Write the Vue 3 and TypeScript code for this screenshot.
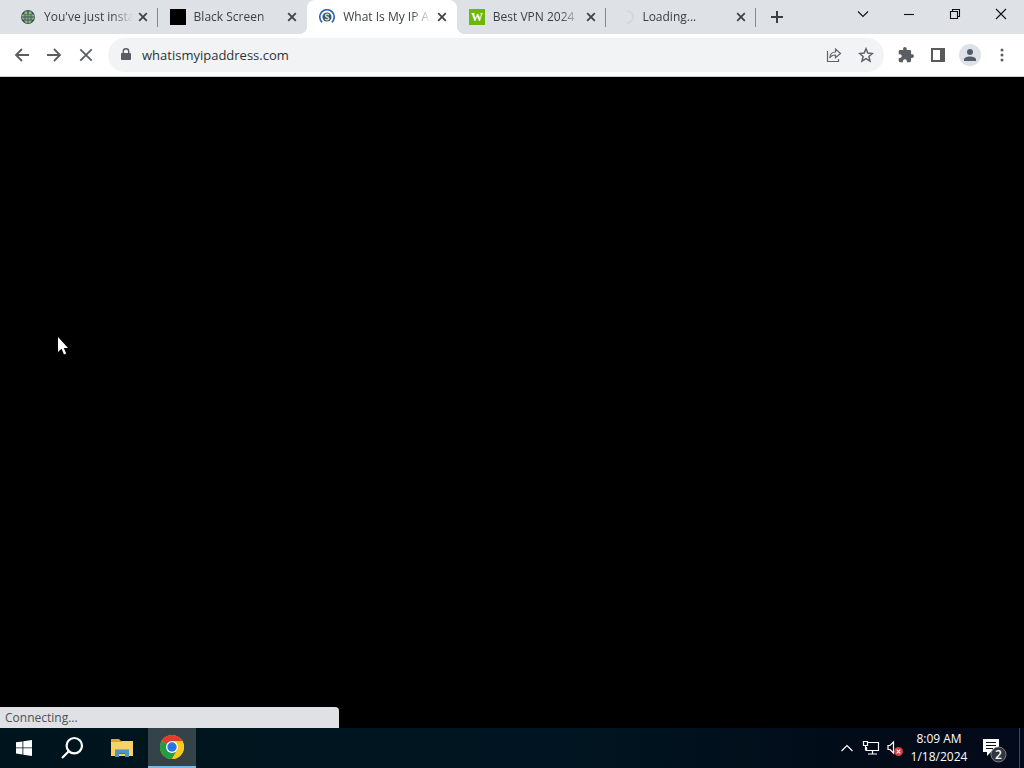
<script setup lang="ts">
import { ref } from 'vue'

interface Tab {
  id: number
  title: string
  icon: 'globe' | 'black' | 'ip' | 'wiz' | 'spinner'
}

const tabs: Tab[] = [
  { id: 1, title: "You've just insta", icon: 'globe' },
  { id: 2, title: 'Black Screen', icon: 'black' },
  { id: 3, title: 'What Is My IP A', icon: 'ip' },
  { id: 4, title: 'Best VPN 2024', icon: 'wiz' },
  { id: 5, title: 'Loading...', icon: 'spinner' },
]
const activeTab = ref(3)
const address = ref('whatismyipaddress.com')
</script>

<template>
  <div class="desktop">
    <header class="strip">
      <nav class="tabs" aria-label="Tabs">
        <div v-for="tab in tabs" :key="tab.id" class="tab" :class="{ active: tab.id === activeTab, before: tab.id === activeTab - 1 }">
          <button class="pick" @click="activeTab = tab.id">
            <svg v-if="tab.icon === 'globe'" class="fav" viewBox="0 0 16 16">
              <circle cx="8" cy="8" r="7" fill="#3b5364" />
              <path d="M5 2.500h2.400v2.400H4zM8.600 2.500H11l1 2.400H8.600zM2 5.600h2.600v2H1.500zM5.400 5.600h2.200v2H5.400zM8.400 5.600h2.200v2H8.400zM11.400 5.600H14l.5 2h-3.100zM1.500 8.400h3.100v2.200H2.500zM5.400 8.400h2.200v2.200H5.400zM8.400 8.400h2.200v2.200H8.400zM11.400 8.400h3.100l-1 2.200h-2.100zM4 11.400h3.600v2.600H6zM8.400 11.400H12L10 14H8.400z" fill="#8fb573" />
            </svg>
            <svg v-else-if="tab.icon === 'black'" class="fav" viewBox="0 0 16 16"><path d="M0 0h16v16H0z" /></svg>
            <svg v-else-if="tab.icon === 'ip'" class="fav" viewBox="0 0 16 16">
              <path d="M3.200 13.300A7.200 7.200 0 1 1 12.800 13.300" fill="none" stroke="#2d69b3" stroke-width="1.700" />
              <circle cx="8" cy="8" r="4.600" fill="#42586b" />
              <path d="M10 5.800C7 4 5 7 8 8s2 4-2 2.200" fill="none" stroke="#d5dfd6" stroke-width="1.400" />
            </svg>
            <svg v-else-if="tab.icon === 'wiz'" class="fav" viewBox="0 0 16 16">
              <path d="M0 0h16v16H0z" fill="#6cb70c" />
              <text x="8" y="12" text-anchor="middle" class="wiz-letter">W</text>
            </svg>
            <svg v-else class="fav" viewBox="0 0 16 16"><path d="M9 2a6 6 0 0 1 0 12" fill="none" stroke="#cfd9e3" stroke-width="2" /></svg>
            <span class="title">{{ tab.title }}</span>
          </button>
          <button class="close" aria-label="Close tab">
            <svg width="10" height="10" viewBox="0 0 10 10"><path d="m1.200 1.200 7.600 7.600m0-7.600L1.200 8.800" stroke="#404348" stroke-width="1.800" /></svg>
          </button>
        </div>
      </nav>
      <button class="new-tab" aria-label="New tab">
        <svg width="14" height="14" viewBox="0 0 14 14"><path d="M7 1v12M1 7h12" stroke="#3b3e42" stroke-width="2" /></svg>
      </button>
      <div class="window-controls">
        <button aria-label="Search tabs"><svg width="12" height="12" viewBox="0 0 12 12"><path d="m1 3.500 5 5 5-5" /></svg></button>
        <button aria-label="Minimize"><svg width="12" height="12" viewBox="0 0 12 12"><path d="M1 6.500h10" /></svg></button>
        <button aria-label="Restore"><svg width="12" height="12" viewBox="0 0 12 12"><path d="M1.500 3.500h7v7h-7zM3.500 3V1.500h7v7H9" /></svg></button>
        <button aria-label="Close"><svg width="12" height="12" viewBox="0 0 12 12"><path d="m1 1 10 10m0-10L1 11" /></svg></button>
      </div>
    </header>

    <div class="toolbar">
      <div class="nav">
        <button aria-label="Back"><svg width="16" height="16" viewBox="0 0 16 16"><path d="M15 8H2m6-6L2 8l6 6" /></svg></button>
        <button aria-label="Forward"><svg width="16" height="16" viewBox="0 0 16 16"><path d="M1 8h13M8 2l6 6-6 6" /></svg></button>
        <button aria-label="Stop"><svg width="16" height="16" viewBox="0 0 16 16"><path d="m2.300 2.300 11.400 11.400m0-11.400L2.300 13.700" /></svg></button>
      </div>
      <div class="omnibox">
        <svg class="lock" width="10" height="14" viewBox="0 0 10 14">
          <path d="M1 5h8a1 1 0 0 1 1 1v5a1 1 0 0 1-1 1H1a1 1 0 0 1-1-1V6a1 1 0 0 1 1-1z" fill="#5a5d61" />
          <path d="M2.300 5.500V3.300a2.700 2.500 0 0 1 5.400 0v2.200" fill="none" stroke="#5a5d61" stroke-width="1.400" />
        </svg>
        <input v-model="address" aria-label="Address" spellcheck="false" />
        <button aria-label="Share">
          <svg width="16" height="16" viewBox="0 0 16 16" fill="none" stroke="#5f6368" stroke-width="1.200">
            <path d="M1.500 4v10.500h11V12M9.500 5V2l5 4.500-5 4.300V8C7 8 5 8.800 3.800 11 4 7.500 6 5 9.500 5z" />
          </svg>
        </button>
        <button aria-label="Bookmark">
          <svg width="16" height="16" viewBox="0 0 16 16"><path d="m8 1.800 1.800 4.300 4.600.4-3.500 3 1.100 4.600-4-2.500-4 2.500 1.100-4.600-3.500-3 4.600-.4z" fill="none" stroke="#5f6368" stroke-width="1.500" /></svg>
        </button>
      </div>
      <div class="actions">
        <button aria-label="Extensions">
          <svg width="16" height="16" viewBox="1 1 22 22"><path d="M20.500 11H19V7a2 2 0 0 0-2-2h-4V3.500a2.500 2.500 0 0 0-5 0V5H4a2 2 0 0 0-2 2v3.800h1.500a2.700 2.700 0 0 1 0 5.400H2V20a2 2 0 0 0 2 2h3.800v-1.500a2.700 2.700 0 0 1 5.400 0V22H17a2 2 0 0 0 2-2v-4h1.500a2.500 2.500 0 0 0 0-5z" fill="#5a5d61" /></svg>
        </button>
        <button aria-label="Side panel">
          <svg width="14" height="14" viewBox="0 0 14 14"><path d="M0 0h14v14H0z" fill="#5a5a5a" /><path d="M2 2h7v10H2z" fill="#fff" /></svg>
        </button>
        <button class="profile" aria-label="Profile">
          <svg width="14" height="14" viewBox="0 0 14 14"><circle cx="7" cy="4" r="3" fill="#505b6c" /><path d="M1 13v-1.500c0-4 12-4 12 0V13z" fill="#505b6c" /></svg>
        </button>
        <button aria-label="Menu">
          <svg width="4" height="14" viewBox="0 0 4 14" fill="#5a5d61"><circle cx="2" cy="2" r="1.500" /><circle cx="2" cy="7" r="1.500" /><circle cx="2" cy="12" r="1.500" /></svg>
        </button>
      </div>
    </div>

    <main class="page"><div class="status">Connecting...</div></main>

    <footer class="taskbar">
      <button class="task" aria-label="Start">
        <svg width="16" height="16" viewBox="0 0 16 16" fill="#fff"><path d="M0 2.300 6.500 1.400v6H0zM7.300 1.300 16 0v7.400H7.300zM0 8.300h6.500v6.200L0 13.600zM7.300 8.300H16V16l-8.700-1.300z" /></svg>
      </button>
      <button class="task" aria-label="Search">
        <svg width="24" height="24" viewBox="0 0 24 24" fill="none" stroke="#fff" stroke-width="2.200"><circle cx="14.300" cy="9.700" r="7.700" /><path d="M8.800 15.200 2 22" /></svg>
      </button>
      <button class="task files" aria-label="File Explorer">
        <svg width="22" height="20" viewBox="0 0 22 20">
          <path d="M0 1h8l2 2h12v5H0z" fill="#e0a52c" /><path d="M0 4h10l2-1h10v15H0z" fill="#f6d267" />
          <path d="M4 11h14v8h-4v-4H8v4H4z" fill="#4a97c4" /><path d="M4 11h14v1H4z" fill="#75b7d3" /><path d="M8 15h6v1H8z" fill="#2676aa" />
        </svg>
      </button>
      <button class="task current" aria-label="Google Chrome">
        <svg width="24" height="24" viewBox="0 0 24 24">
          <circle cx="12" cy="12" r="12" fill="#fbc91b" />
          <path d="M12 12 1.600 6A12 12 0 0 1 22.400 6z" fill="#e53b2e" />
          <path d="M12 12 1.600 6A12 12 0 0 0 12 24l5.200-9z" fill="#259b45" />
          <path d="M12 6h10.400A12 12 0 0 1 12 24l5.200-9z" fill="#fbc91b" />
          <circle cx="12" cy="12" r="6" fill="#fff" /><circle cx="12" cy="12" r="4.700" fill="#2873e5" />
        </svg>
      </button>
      <div class="tray">
        <button aria-label="Show hidden icons"><svg width="12" height="12" viewBox="0 0 12 12"><path d="m.500 9 5.500-5.500L11.500 9" /></svg></button>
        <button aria-label="Network"><svg width="18" height="14" viewBox="0 0 18 14"><path d="M5.500 1.500h11v8h-12V6M10.500 9.500v3M6 13h9M1.500.500h4v4h-4zM3.500 4.500v5" /></svg></button>
        <button aria-label="Volume muted">
          <svg width="16" height="16" viewBox="0 0 16 16"><path d="M1 5.500h2L6.500 2v11L3 9.500H1z" /><circle cx="11.500" cy="11.500" r="4.500" class="mute" /><path d="m9.700 9.700 3.600 3.600m0-3.600-3.600 3.600" /></svg>
        </button>
      </div>
      <button class="clock"><span>8:09 AM</span><span>1/18/2024</span></button>
      <button class="notes" aria-label="2 notifications">
        <svg width="24" height="24" viewBox="0 0 24 24">
          <path d="M0 0h16v13H8l-4 4v-4H0z" fill="#fff" /><path d="M3 3.500h10M3 6.500h10M3 9.500h7" stroke="#07121d" />
          <circle cx="15.500" cy="15.500" r="7.500" fill="#30373e" stroke="#7b8187" />
          <text x="15.500" y="20" text-anchor="middle" class="count">2</text>
        </svg>
      </button>
      <button class="peek" aria-label="Show desktop"></button>
    </footer>

    <svg class="cursor" width="12" height="20" viewBox="0 0 12 20"><path d="M1 1v15l3.500-3.300L7 18.500l2.200-1L6.800 12H11z" fill="#fff" /></svg>
  </div>
</template>

<style>
body { margin: 0; background: #000; }
</style>

<style scoped>
.desktop { position: relative; display: flex; flex-direction: column; min-height: 100vh; background: #000; color: #3c4043; font: 12px/16px "Open Sans", "Noto Sans", sans-serif; overflow: hidden; }
.desktop * { box-sizing: border-box; }
button { display: flex; align-items: center; justify-content: center; padding: 0; border: 0; background: none; color: inherit; font: inherit; }
svg { display: block; flex: none; }
.strip { display: flex; height: 34px; padding-left: 8px; background: #dee1e6; }
.tabs { display: flex; flex: 0 1 748px; min-width: 0; }
.tab { position: relative; display: flex; flex: 1 1 0; min-width: 0; align-items: center; padding: 0 7px 0 12px; }
.tab:not(.active):not(.before)::after { content: ""; position: absolute; right: 0; top: 8px; width: 1px; height: 19px; background: #85898f; }
.tab.active { background: #fff; border-radius: 8px 8px 0 0; }
.tab.active::before, .tab.active::after { content: ""; position: absolute; bottom: 0; width: 8px; height: 8px; }
.tab.active::before { left: -8px; background: radial-gradient(circle at 0 0, transparent 8px, #fff 8px); }
.tab.active::after { right: -8px; background: radial-gradient(circle at 100% 0, transparent 8px, #fff 8px); }
.pick { flex: 1; min-width: 0; height: 34px; gap: 8px; }
.fav { width: 16px; height: 16px; }
.wiz-letter { fill: #fff; font: bold 12px "Liberation Serif", serif; }
.title { flex: 1; min-width: 0; white-space: nowrap; text-align: left; mask-image: linear-gradient(90deg, #000 76%, transparent); mask-clip: no-clip; }
.close { width: 16px; height: 16px; margin-left: 2px; }
.new-tab { width: 28px; margin-left: 7px; }
.window-controls { display: flex; height: 28px; margin-left: auto; }
.window-controls button { width: 46px; }
.window-controls path { fill: none; stroke: #111; stroke-width: 1.1; }
.toolbar { display: flex; align-items: center; height: 43px; padding-left: 6px; background: #fff; border-bottom: 1px solid #cbccce; }
.nav { display: flex; }
.nav button { width: 32px; height: 32px; }
.nav path { fill: none; stroke: #5a5d61; stroke-width: 1.8; }
.omnibox { display: flex; flex: 1; min-width: 0; align-items: center; height: 34px; margin-left: 6px; padding: 0 2px 0 13px; border-radius: 17px; background: #f1f3f4; }
.omnibox input { flex: 1; min-width: 0; height: 28px; margin-left: 11px; padding: 0; border: 0; outline: 0; background: none; color: #303236; font: 13px/20px "Open Sans", "Noto Sans", sans-serif; }
.omnibox button { width: 32px; height: 32px; }
.actions { display: flex; align-items: center; margin-left: 6px; padding-right: 6px; }
.actions button { width: 32px; height: 32px; }
.actions .profile { width: 22px; height: 22px; margin: 0 5px; border-radius: 50%; background: #dee1e6; }
.page { display: flex; flex: 1; align-items: flex-end; }
.status { width: 33.1%; height: 21px; padding: 3px 5px 2px; border-radius: 0 4px 0 0; background: #dfe1e5; color: #4d5055; }
.taskbar { display: flex; height: 40px; background: linear-gradient(90deg, #00141d, #001521 55%, #020b18 85%, #020a1b); color: #fff; }
.task { width: 48px; }
.files { margin-left: 2px; }
.current { margin-left: 2px; background: #344249; border-bottom: 2px solid #76b9ed; }
.tray { display: flex; margin-left: auto; }
.tray button { width: 24px; }
.tray path { fill: none; stroke: #fff; stroke-width: 1.2; }
.mute { fill: #d83b40; }
.clock { flex-direction: column; width: 64px; line-height: 18px; }
.notes { width: 42px; margin-left: 3px; padding-top: 5px; }
.count { fill: #fff; font: 600 12px "Open Sans", sans-serif; }
.peek { width: 5px; margin-left: 3px; border-left: 1px solid #3b4858; }
.cursor { position: absolute; left: 57px; top: 336px; pointer-events: none; }
</style>
